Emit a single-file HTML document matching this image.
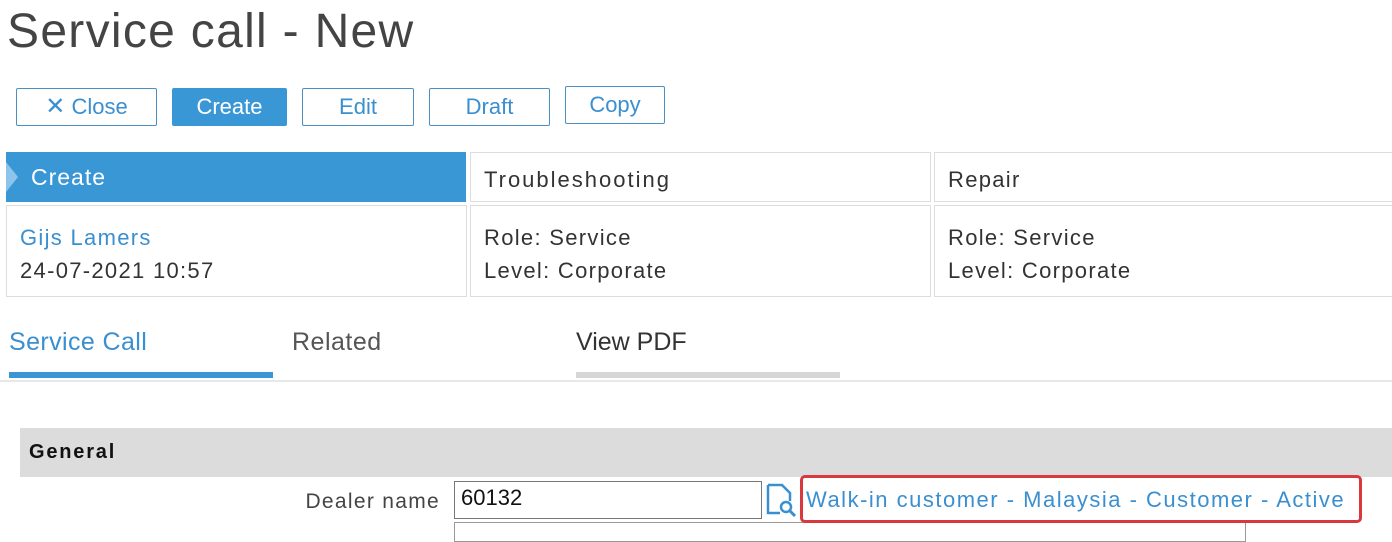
<!DOCTYPE html>
<html><head><style>
body{margin:0;width:1392px;height:533px;overflow:hidden;background:#fff;font-family:"Liberation Sans",sans-serif;position:relative}
.a{position:absolute}
.btn{position:absolute;top:88px;height:38px;border:1px solid #4a90c2;border-radius:2px;box-sizing:border-box;color:#3a8fd0;font-size:22px;line-height:36px;text-align:center;background:#fff}
.cell{position:absolute;border:1px solid #ddd;box-sizing:border-box;font-size:22px;color:#333;letter-spacing:1.3px}
</style></head><body>
<div class="a" style="left:7px;top:4px;font-size:48px;color:#444;letter-spacing:1.3px">Service call - New</div>
<div class="btn" style="left:16px;width:141px"><span style="font-size:24px">✕</span> Close</div>
<div class="btn" style="left:172px;width:115px;background:#3a97d6;color:#fff;border-color:#3a97d6">Create</div>
<div class="btn" style="left:302px;width:112px">Edit</div>
<div class="btn" style="left:429px;width:121px">Draft</div>
<div class="btn" style="left:565px;width:100px;top:86px">Copy</div>

<div class="a" style="left:6px;top:152px;width:460px;height:50px;background:#3a97d6"></div>
<div class="a" style="left:6px;top:162px;width:0;height:0;border-top:15px solid transparent;border-bottom:15px solid transparent;border-left:12px solid #8cc4ea"></div>
<div class="a" style="left:31px;top:164px;font-size:23px;color:#fff;letter-spacing:1px">Create</div>
<div class="cell" style="left:470px;top:152px;width:461px;height:50px;padding:14px 0 0 13px;letter-spacing:2px">Troubleshooting</div>
<div class="cell" style="left:934px;top:152px;width:470px;height:50px;padding:14px 0 0 13px">Repair</div>
<div class="cell" style="left:6px;top:205px;width:461px;height:92px;padding:15px 0 0 13px;line-height:33px"><span style="color:#3a8fd0">Gijs Lamers</span><br>24-07-2021 10:57</div>
<div class="cell" style="left:470px;top:205px;width:461px;height:92px;padding:15px 0 0 13px;line-height:33px">Role: Service<br>Level: Corporate</div>
<div class="cell" style="left:934px;top:205px;width:470px;height:92px;padding:15px 0 0 13px;line-height:33px">Role: Service<br>Level: Corporate</div>

<div class="a" style="left:9px;top:328px;font-size:25px;color:#3a8fd0;letter-spacing:0.4px">Service Call</div>
<div class="a" style="left:292px;top:328px;font-size:25px;color:#555;letter-spacing:0.5px">Related</div>
<div class="a" style="left:576px;top:328px;font-size:25px;color:#333">View PDF</div>
<div class="a" style="left:9px;top:372px;width:264px;height:6px;background:#3a97d6"></div>
<div class="a" style="left:576px;top:372px;width:264px;height:6px;background:#d6d6d6"></div>
<div class="a" style="left:0;top:380px;width:1392px;height:2px;background:#e8e8e8"></div>

<div class="a" style="left:20px;top:428px;width:1372px;height:49px;background:#dcdcdc"></div>
<div class="a" style="left:29px;top:441px;font-size:20px;font-weight:bold;color:#111;letter-spacing:1.8px">General</div>
<div class="a" style="left:240px;top:490px;width:200px;text-align:right;font-size:21px;color:#444;letter-spacing:1.3px">Dealer name</div>
<div class="a" style="left:454px;top:481px;width:308px;height:38px;border:1px solid #777;box-sizing:border-box;font-size:22px;padding:3px 0 0 6px;color:#111">60132</div>
<div class="a" style="left:454px;top:522px;width:792px;height:20px;border:1px solid #999;box-sizing:border-box"></div>
<svg class="a" style="left:764px;top:482px" width="34" height="36" viewBox="0 0 34 36"><path d="M4 3h14l8 8v8M4 3v28h12" fill="none" stroke="#3a8fd0" stroke-width="2.5"/><circle cx="22" cy="25" r="5" fill="none" stroke="#3a8fd0" stroke-width="2.5"/><path d="M26 29l5 5" stroke="#3a8fd0" stroke-width="3"/></svg>
<div class="a" style="left:800px;top:475px;width:562px;height:48px;border:3px solid #d9383c;border-radius:5px;box-sizing:border-box"></div>
<div class="a" style="left:806px;top:487px;font-size:22px;color:#3a8fd0;letter-spacing:1.5px">Walk-in customer - Malaysia - Customer - Active</div>
</body></html>
